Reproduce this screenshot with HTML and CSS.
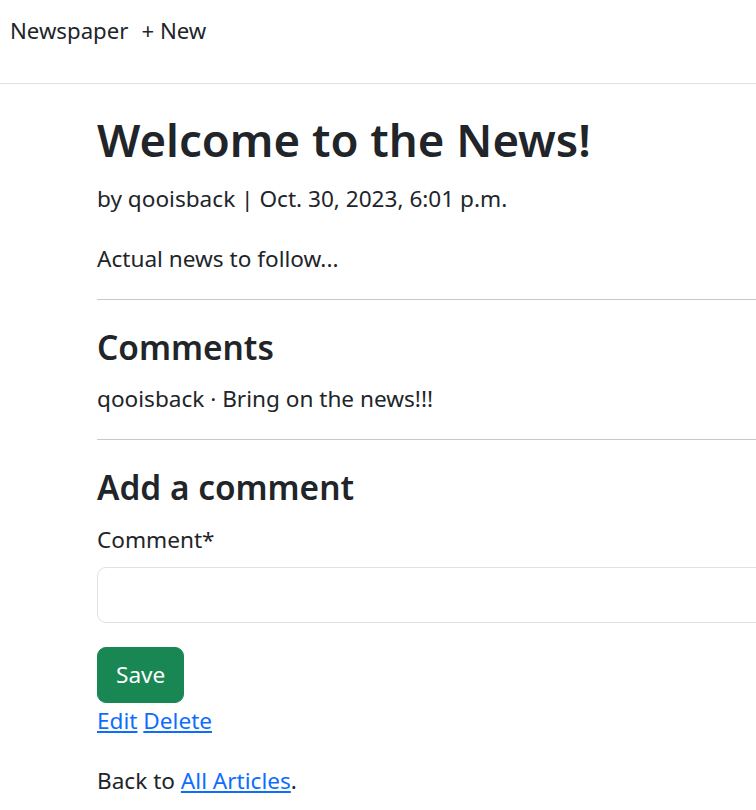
FILE: index.html
```html
<!DOCTYPE html>
<html lang="en">
<head>
<meta charset="utf-8">
<title>Welcome to the News!</title>
<link rel="stylesheet" href="styles.css">
</head>
<body>
<nav class="navbar">
  <a class="brand" href="#">Newspaper</a>
  <a class="nav-link" href="#">+ New</a>
</nav>
<main class="container">
  <h1 class="title">Welcome to the News!</h1>
  <p class="byline">by qooisback | Oct. 30, 2023, 6:01 p.m.</p>
  <p class="body-text">Actual news to follow...</p>
  <hr class="rule">
  <h2 class="section-title">Comments</h2>
  <p class="comment">qooisback &middot; Bring on the news!!!</p>
  <hr class="rule">
  <h2 class="section-title">Add a comment</h2>
  <form class="comment-form">
    <label class="form-label" for="id_comment">Comment*</label>
    <input class="form-control" type="text" id="id_comment" name="comment">
    <button class="btn-save" type="button">Save</button>
  </form>
  <p class="actions"><a class="link" href="#">Edit</a> <a class="link" href="#">Delete</a></p>
  <p class="back">Back to <a class="link" href="#">All Articles</a>.</p>
</main>
</body>
</html>
```
FILE: styles.css
```css
html {
  overflow: hidden;
}
body {
  margin: 0;
  background: #fff;
  color: #212529;
  font-family: "Noto Sans", "Open Sans", sans-serif;
  font-size: 22.6px;
  line-height: 36px;
}
.navbar {
  display: flex;
  gap: 13px;
  height: 84px;
  box-sizing: border-box;
  padding: 13px 10px 0;
  border-bottom: 1px solid #dee2e6;
  font-size: 22.2px;
  line-height: 36px;
}
.brand, .nav-link {
  color: #212529;
  text-decoration: none;
}
.container {
  width: 900px;
  padding: 0 0 0 97px;
}
.title {
  margin: 27px 0 12px;
  font-size: 45.5px;
  line-height: 57.6px;
  font-weight: 600;
}
.byline, .back {
  margin: 0 0 24px;
}
.body-text {
  margin: 0 0 22px;
}
.comment {
  margin: 0 0 22px;
}
.rule {
  margin: 0 0 27px;
  border: 0;
  border-top: 1px solid #c8c9ca;
  height: 0;
}
.section-title {
  margin: 0 0 14px;
  font-size: 33.4px;
  line-height: 40.8px;
  font-weight: 600;
}
.comment-form {
  display: flex;
  flex-direction: column;
  align-items: flex-start;
}
.form-label {
  margin-bottom: 9px;
}
.form-control {
  width: 100%;
  height: 56px;
  box-sizing: border-box;
  border: 1px solid #dee2e6;
  border-radius: 9px;
  padding: 9px 18px;
  font: inherit;
  margin: 0 0 24px;
}
.btn-save {
  height: 56px;
  box-sizing: border-box;
  padding: 9px 18px;
  border: 1px solid #198754;
  border-radius: 9px;
  background: #198754;
  color: #fff;
  font: inherit;
}
.link {
  color: #0d6efd;
  text-decoration: underline;
}
.actions {
  margin: 0 0 24px;
}
```
